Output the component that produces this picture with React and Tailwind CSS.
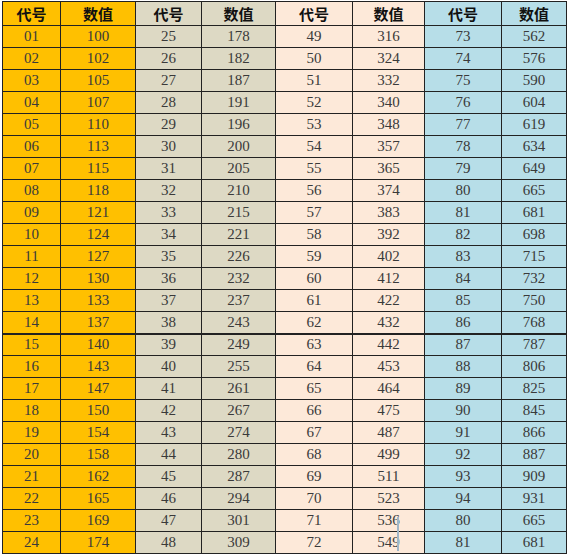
import React from 'react';

const codes1 = Array.from({ length: 24 }, (_, i) => String(i + 1).padStart(2, '0'));
const vals1 = [100, 102, 105, 107, 110, 113, 115, 118, 121, 124, 127, 130, 133, 137, 140, 143, 147, 150, 154, 158, 162, 165, 169, 174];
const codes2 = Array.from({ length: 24 }, (_, i) => i + 25);
const vals2 = [178, 182, 187, 191, 196, 200, 205, 210, 215, 221, 226, 232, 237, 243, 249, 255, 261, 267, 274, 280, 287, 294, 301, 309];
const codes3 = Array.from({ length: 24 }, (_, i) => i + 49);
const vals3 = [316, 324, 332, 340, 348, 357, 365, 374, 383, 392, 402, 412, 422, 432, 442, 453, 464, 475, 487, 499, 511, 523, 536, 549];
const codes4 = [73, 74, 75, 76, 77, 78, 79, 80, 81, 82, 83, 84, 85, 86, 87, 88, 89, 90, 91, 92, 93, 94, 80, 81];
const vals4 = [562, 576, 590, 604, 619, 634, 649, 665, 681, 698, 715, 732, 750, 768, 787, 806, 825, 845, 866, 887, 909, 931, 665, 681];

const groups = [
  { codes: codes1, vals: vals1, bg: 'bg-[#ffc000]', w1: 'w-[58px]', w2: 'w-[75px]' },
  { codes: codes2, vals: vals2, bg: 'bg-[#ddd9c4]', w1: 'w-[66px]', w2: 'w-[74px]' },
  { codes: codes3, vals: vals3, bg: 'bg-[#fde9d9]', w1: 'w-[77px]', w2: 'w-[72px]' },
  { codes: codes4, vals: vals4, bg: 'bg-[#b7dee8]', w1: 'w-[77px]', w2: 'w-[65px]' },
];

const App = () => {
  return (
    <div className="w-[568px] h-[560px] bg-white relative font-['Liberation_Serif',serif]">
      <table className="ml-[2px] mt-px border-collapse border border-[#222] table-fixed">
        <thead>
          <tr className="h-[24px]">
            {groups.map((g, gi) => (
              <React.Fragment key={gi}>
                <th className={`${g.w1} ${g.bg} border border-[#222] p-0 text-[15px] font-bold text-[#111] font-['Noto_Sans_CJK_SC',sans-serif] leading-none`}>代号</th>
                <th className={`${g.w2} ${g.bg} border border-[#222] p-0 text-[15px] font-bold text-[#111] font-['Noto_Sans_CJK_SC',sans-serif] leading-none`}>数值</th>
              </React.Fragment>
            ))}
          </tr>
        </thead>
        <tbody>
          {codes1.map((_, ri) => (
            <tr key={ri} className={ri === 13 ? 'h-[22px] border-b-2 border-[#222]' : 'h-[22px]'}>
              {groups.map((g, gi) => (
                <React.Fragment key={gi}>
                  <td className={`${g.bg} border border-[#222] p-0 text-center text-[15px] text-[#3a3a3a] leading-none`}>{g.codes[ri]}</td>
                  <td className={`${g.bg} border border-[#222] p-0 text-center text-[15px] text-[#3a3a3a] leading-none`}>{g.vals[ri]}</td>
                </React.Fragment>
              ))}
            </tr>
          ))}
        </tbody>
      </table>
      {/* stray cursor mark near the bottom */}
      <div className="absolute left-[397px] top-[516px] w-[2px] h-[34px] bg-[#9fb6c8]" />
    </div>
  );
};

export default App;
